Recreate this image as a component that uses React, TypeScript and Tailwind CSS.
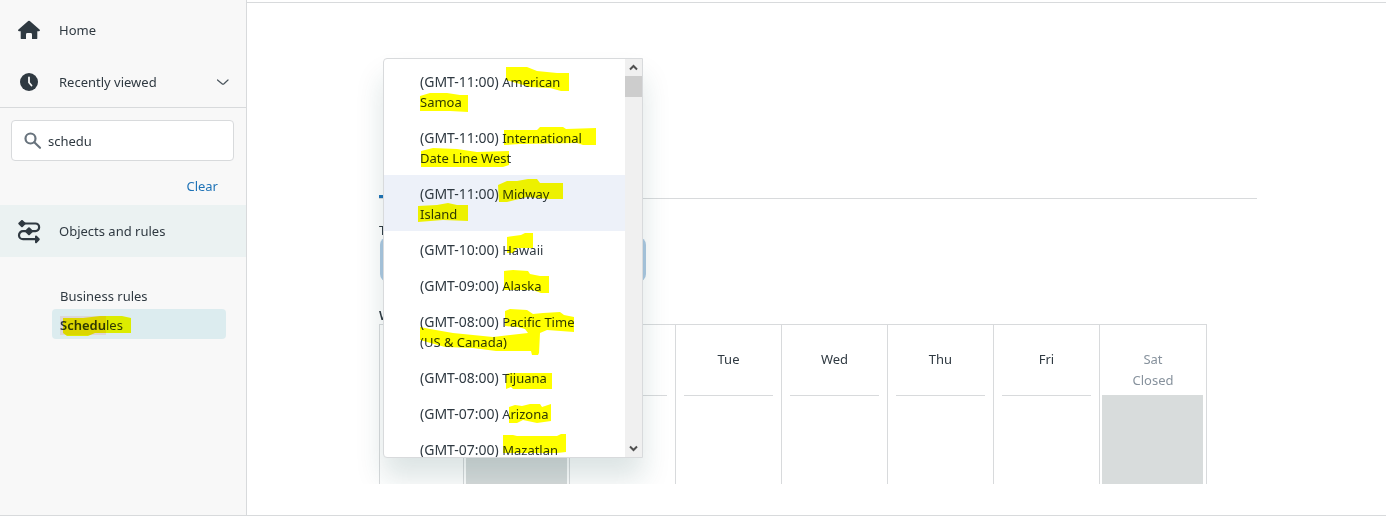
import React from 'react';

const timeZones = [
  { offset: '(GMT-11:00)', name: 'American Samoa' },
  { offset: '(GMT-11:00)', name: 'International Date Line West' },
  { offset: '(GMT-11:00)', name: 'Midway Island' },
  { offset: '(GMT-10:00)', name: 'Hawaii' },
  { offset: '(GMT-09:00)', name: 'Alaska' },
  { offset: '(GMT-08:00)', name: 'Pacific Time (US & Canada)' },
  { offset: '(GMT-08:00)', name: 'Tijuana' },
  { offset: '(GMT-07:00)', name: 'Arizona' },
  { offset: '(GMT-07:00)', name: 'Mazatlan' },
];

const days = [
  { name: 'Sun', closed: true },
  { name: 'Mon', closed: false },
  { name: 'Tue', closed: false },
  { name: 'Wed', closed: false },
  { name: 'Thu', closed: false },
  { name: 'Fri', closed: false },
  { name: 'Sat', closed: true },
];

// Highlighter strokes over the open menu, in menu coordinates
const menuStrokes = [
  'M123 9H144L154 13L174 15H186V33H178L167 30L147 29L130 24L123 22Z',
  'M37 38L47 35L64 35L77 37H85V54L67 53H37Z',
  'M121 72H154L157 69H180L183 71L213 70V87H200L194 85L137 86L121 87Z',
  'M38 93L50 90L74 91L94 94L126 93V107L120 109H38Z',
  'M115 127L124 123L134 123L145 121H154L157 125H180V141H167L144 139L124 144H116Z',
  'M35 148L54 147L65 145L74 147H85V163L60 162L35 164Z',
  'M124 179L138 177L142 175H150V190H134L130 195H124Z',
  'M121 213L130 212L145 213L147 216L157 218H166V235H158L150 232H121Z',
  'M122 253L127 251L144 252L150 256L160 255L177 254L181 257L191 259V274L164 272L157 275L156 295L155 297H149L148 293H113L90 290L62 289L37 282V269L47 271L70 275L110 279L145 275L142 271L135 269L122 268Z',
  'M123 316L128 315H169V331H130L128 329L123 331Z',
  'M126 349L132 347L139 348L147 346H157L159 349L168 346V363L154 365L140 362L134 365H126Z',
  'M120 377H130L134 378H174L178 376H183V394L174 395H120Z',
];

const HomeIcon = () => (
  <svg className="h-6 w-6" viewBox="0 0 24 24" fill="#2f3941" aria-hidden="true">
    <path d="M12 1.800a1.200 1.200 0 0 1 .8.300l9.700 8.300c.8.7.4 1.800-.6 1.800H20.300v7c0 .6-.3.9-.9.9H15v-4.600a1.400 1.400 0 0 0-1.400-1.400h-3.200A1.400 1.400 0 0 0 9 15.500V20.100H4.600c-.6 0-.9-.3-.9-.9V12.200H2.100c-1 0-1.400-1.100-.6-1.800l9.700-8.300A1.200 1.200 0 0 1 12 1.800Z" />
  </svg>
);

const ClockIcon = () => (
  <svg className="h-6 w-6" viewBox="0 0 24 24" aria-hidden="true">
    <circle cx="12" cy="11" r="9" fill="#2f3941" />
    <path d="M12 6.500V11.500L14.500 14.500" fill="none" stroke="#f8f8f8" strokeWidth="1.800" strokeLinecap="round" strokeLinejoin="round" />
  </svg>
);

const RulesIcon = () => (
  <svg className="h-6 w-6" viewBox="0 0 24 24" aria-hidden="true">
    <g fill="none" stroke="#2f3941" strokeWidth="2.200">
      <path d="M5 3.500H18.500a3.500 3.700 0 0 1 0 7.700H6a4 4 0 0 0 0 8H19" />
    </g>
    <g fill="#2f3941" stroke="#2f3941" strokeWidth="2" strokeLinejoin="round">
      <path d="M5 0.900L7.700 3.500L5 6.200L2.300 3.500Z" />
      <path d="M12 8.200L15 11.200L12 14.200L9 11.200Z" />
      <path d="M19 16.400L21.800 19.200L19 22.200Z" />
    </g>
  </svg>
);

const NavRow = ({ icon, label, active, children }: any) => (
  <a
    href="#"
    className={
      active
        ? 'flex h-[52px] items-center bg-[#ebf2f2] px-[17px] pt-px'
        : 'flex h-[52px] items-center px-[17px] pt-px'
    }
  >
    {icon}
    <span className="ml-[18px] flex-1">{label}</span>
    {children}
  </a>
);

const Sidebar = () => (
  <aside className="w-[247px] shrink-0 border-r border-[#d8dadc] bg-[#f8f8f8] pt-1">
    <nav className="h-[104px] border-b border-[#d8dadc]">
      <NavRow icon={<HomeIcon />} label="Home" />
      <NavRow icon={<ClockIcon />} label="Recently viewed">
        <svg className="h-3 w-3" viewBox="0 0 12 12" fill="none" stroke="#49545c" aria-hidden="true">
          <path d="M0.500 3L5 6.700C5.600 7.200 6.400 7.200 7 6.700L11 3" strokeWidth="1.200" strokeLinecap="round" />
        </svg>
      </NavRow>
    </nav>

    <div className="px-3 pt-3">
      <label className="-ml-px flex h-[41px] items-center rounded border border-[#d8dadc] bg-white pl-3">
        <svg className="h-[18px] w-[18px] shrink-0" viewBox="0 0 18 18" fill="none" stroke="#68737d" strokeWidth="2.200" aria-hidden="true">
          <circle cx="6.500" cy="6.500" r="5" />
          <path d="M10.300 10.300L16 15.800" strokeLinecap="round" />
        </svg>
        <input
          type="text"
          aria-label="Search"
          defaultValue="schedu"
          className="ml-1.5 w-full min-w-0 bg-transparent pt-0.5 outline-none"
        />
      </label>
      <div className="flex h-[44px] items-center justify-end pr-4 pt-2">
        <button type="button" className="text-[#1f73b7]">Clear</button>
      </div>
    </div>

    <NavRow icon={<RulesIcon />} label="Objects and rules" active />

    <ul className="ml-[52px] mr-5 pt-6">
      <li>
        <a href="#" className="flex h-7 items-center px-2 pt-1">Business rules</a>
      </li>
      <li>
        <a href="#" className="relative flex h-[30px] items-center rounded bg-[#dcecef] px-2 pt-[3px]">
          <mark className="bg-[#dcd6d8] font-semibold text-inherit">Schedu</mark>les
          <svg className="absolute left-0 top-0 h-[30px] w-[90px] mix-blend-multiply" viewBox="0 0 90 30" fill="#ffff00" aria-hidden="true">
            <path d="M11 9H31L48 7H70L79 9V24H43L36 27H15L11 24Z" />
          </svg>
        </a>
      </li>
    </ul>
  </aside>
);

const ScrollArrow = ({ d, label }: any) => (
  <button type="button" aria-label={label} className="flex h-[17px] w-full items-center justify-center">
    <svg className="h-[9px] w-[9px]" viewBox="0 0 9 9" fill="none" stroke="#505050" strokeWidth="2" aria-hidden="true">
      <path d={d} />
    </svg>
  </button>
);

const TimeZoneMenu = () => {
  const [active, setActive] = React.useState('Midway Island');

  return (
    <div className="absolute left-1 top-[-162px] flex h-[400px] w-[260px] overflow-hidden rounded-l border border-[#d8dadc] bg-white shadow-[0_20px_28px_0_rgba(23,73,77,0.15)]">
      <ul className="flex-1 overflow-hidden pt-1">
        {timeZones.map((zone) => (
          <li key={zone.name}>
            <button
              type="button"
              onClick={() => setActive(zone.name)}
              className={
                zone.name === active
                  ? 'block w-full bg-[#edf1f9] px-9 pt-[9px] pb-[7px] text-left leading-5'
                  : 'block w-full px-9 pt-[9px] pb-[7px] text-left leading-5'
              }
            >
              <span className="text-[14px] leading-5">{zone.offset}</span>{` ${zone.name}`}
            </button>
          </li>
        ))}
      </ul>
      <div className="flex w-[17px] flex-col bg-[#f0f0f0]">
        <ScrollArrow d="M1 6.500L4.500 3L8 6.500" label="Scroll up" />
        <div className="h-[21px] bg-[#cdcdcd]" />
        <div className="flex-1" />
        <ScrollArrow d="M1 2.500L4.500 6L8 2.500" label="Scroll down" />
      </div>
      <svg className="pointer-events-none absolute -left-px -top-px h-[400px] w-[260px] mix-blend-multiply" viewBox="0 0 260 400" fill="#ffff00" aria-hidden="true">
        {menuStrokes.map((d) => (
          <path key={d} d={d} />
        ))}
      </svg>
    </div>
  );
};

const WeekCalendar = () => (
  <table className="w-[828px] table-fixed border-separate border-spacing-0 border-l border-t border-[#d8dadc]">
    <colgroup>
      <col className="w-[84px]" />
      <col className="w-[106px]" span={6} />
      <col />
    </colgroup>
    <thead>
      <tr className="h-[71px]">
        <td className="border-r border-[#d8dadc]" />
        {days.map((day) => (
          <th key={day.name} scope="col" className="border-r border-[#d8dadc] p-0 align-top font-normal">
            <div
              className={
                day.closed
                  ? 'h-[70px] pt-6 leading-[21px] text-[#87929d]'
                  : 'mx-2 h-[71px] border-b border-[#d8dadc] pt-6 leading-[21px]'
              }
            >
              {day.name}
              {day.closed && <div>Closed</div>}
            </div>
          </th>
        ))}
      </tr>
    </thead>
    <tbody>
      <tr className="h-[88px]">
        <td className="border-r border-[#d8dadc]" />
        {days.map((day) => (
          <td key={day.name} className="border-r border-[#d8dadc] p-0 align-top">
            {day.closed && <div className="-mt-px ml-0.5 h-[89px] w-[101px] bg-[#d8dcdc]" />}
          </td>
        ))}
      </tr>
    </tbody>
  </table>
);

const App = () => {
  return (
    <div className="flex min-h-screen border-b border-[#d8dadc] bg-white font-['Noto_Sans','Open_Sans',sans-serif] text-[13px] text-[#2f3941]">
      <Sidebar />
      <main className="min-w-0 flex-1 pt-0.5">
        <div className="overflow-hidden border-t border-[#d8dadc] pl-[132px] pr-[129px]">
          <div className="flex h-[196px] items-end border-b border-[#d8dadc]">
            <div className="h-[3px] w-16 bg-[#1f73b7]" />
          </div>

          <div className="relative mt-[21px]">
            <label htmlFor="time-zone" className="block h-[17px] leading-5">Time zone</label>
            <button
              id="time-zone"
              type="button"
              className="ml-px block h-[45px] w-[266px] rounded-lg bg-[#adc9e2]"
            />
            <TimeZoneMenu />
          </div>

          <h2 className="mt-[23px] h-[19px] font-semibold leading-5">Weekly schedule</h2>
          <WeekCalendar />
        </div>
      </main>
    </div>
  );
};

export default App;
